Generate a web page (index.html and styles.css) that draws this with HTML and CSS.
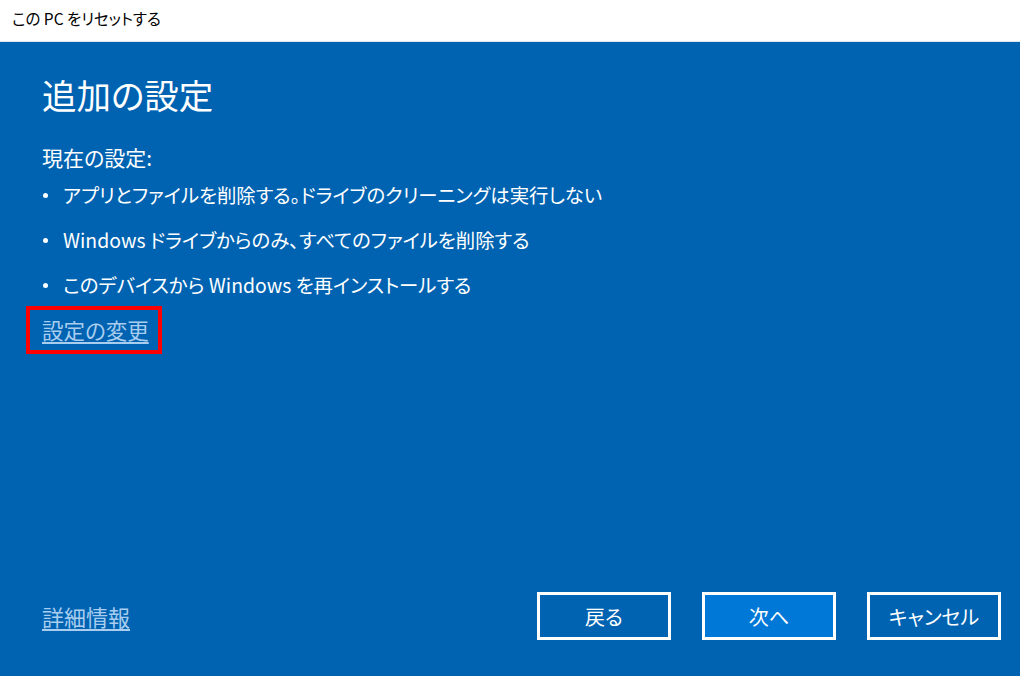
FILE: index.html
```html
<!DOCTYPE html>
<html lang="ja">
<head>
<meta charset="utf-8">
<title>このPCをリセットする</title>
<link rel="stylesheet" href="styles.css">
</head>
<body>
<div class="window">
  <div class="titlebar">この PC をリセットする</div>
  <div class="content">
    <h1 class="heading">追加の設定</h1>
    <p class="label">現在の設定:</p>
    <ul class="settings">
      <li>アプリとファイルを削除する。ドライブのクリーニングは実行しない</li>
      <li>Windows ドライブからのみ、すべてのファイルを削除する</li>
      <li>このデバイスから Windows を再インストールする</li>
    </ul>
    <div class="change-wrap"><a class="link change" href="#">設定の変更</a></div>
    <div class="footer">
      <a class="link more" href="#">詳細情報</a>
      <div class="buttons">
        <button class="btn">戻る</button>
        <button class="btn primary">次へ</button>
        <button class="btn">キャンセル</button>
      </div>
    </div>
  </div>
</div>
</body>
</html>
```

FILE: styles.css
```css
html, body {
  margin: 0;
  padding: 0;
}
body {
  width: 1020px;
  height: 676px;
  overflow: hidden;
  font-family: "Noto Sans CJK JP", "Noto Sans", sans-serif;
  font-feature-settings: "palt";
}
.window {
  display: flex;
  flex-direction: column;
  height: 676px;
}
.titlebar {
  height: 42px;
  box-sizing: border-box;
  background: #ffffff;
  color: #000000;
  font-size: 15.5px;
  padding: 7px 0 0 12px;
  line-height: 22px;
  border-bottom: 1px solid #d9e6f2;
}
.content {
  flex: 1;
  background: #0063b1;
  color: #ffffff;
  padding: 0 19px 36px 42px;
  display: flex;
  flex-direction: column;
}
.heading {
  margin: 28px 0 0 0;
  font-size: 34.5px;
  font-weight: 400;
  line-height: 48px;
}
.label {
  margin: 25px 0 0 0;
  font-size: 21px;
  line-height: 28px;
}
.settings {
  list-style: none;
  margin: 0;
  padding: 0;
}
.settings li {
  font-size: 19.4px;
  line-height: 26px;
  margin-top: 19px;
  padding-left: 21px;
  position: relative;
}
.settings li:first-child {
  margin-top: 11px;
}
.settings li::before {
  content: "";
  position: absolute;
  left: 1px;
  top: 11px;
  width: 5px;
  height: 5px;
  border-radius: 50%;
  background: #ffffff;
}
.change-wrap {
  margin: 8px 0 0 -16px;
  align-self: flex-start;
  border: 4px solid #ff0000;
  padding: 5px 9px 5px 12px;
}
.link {
  color: #a9cdef;
  text-decoration: underline;
  text-underline-offset: 3px;
}
.change {
  font-size: 21.5px;
  line-height: 30px;
}
.footer {
  margin-top: auto;
  display: flex;
  align-items: center;
  justify-content: space-between;
}
.more {
  font-size: 22px;
  line-height: 28px;
}
.buttons {
  display: flex;
  gap: 31px;
}
.btn {
  width: 134px;
  height: 48px;
  box-sizing: border-box;
  border: 3px solid #ffffff;
  background: #0063b1;
  color: #ffffff;
  font-family: "Noto Sans CJK JP", "Noto Sans", sans-serif;
  font-feature-settings: "palt";
  font-size: 20px;
  padding: 0;
}
.btn.primary {
  background: #0078d7;
}
```
